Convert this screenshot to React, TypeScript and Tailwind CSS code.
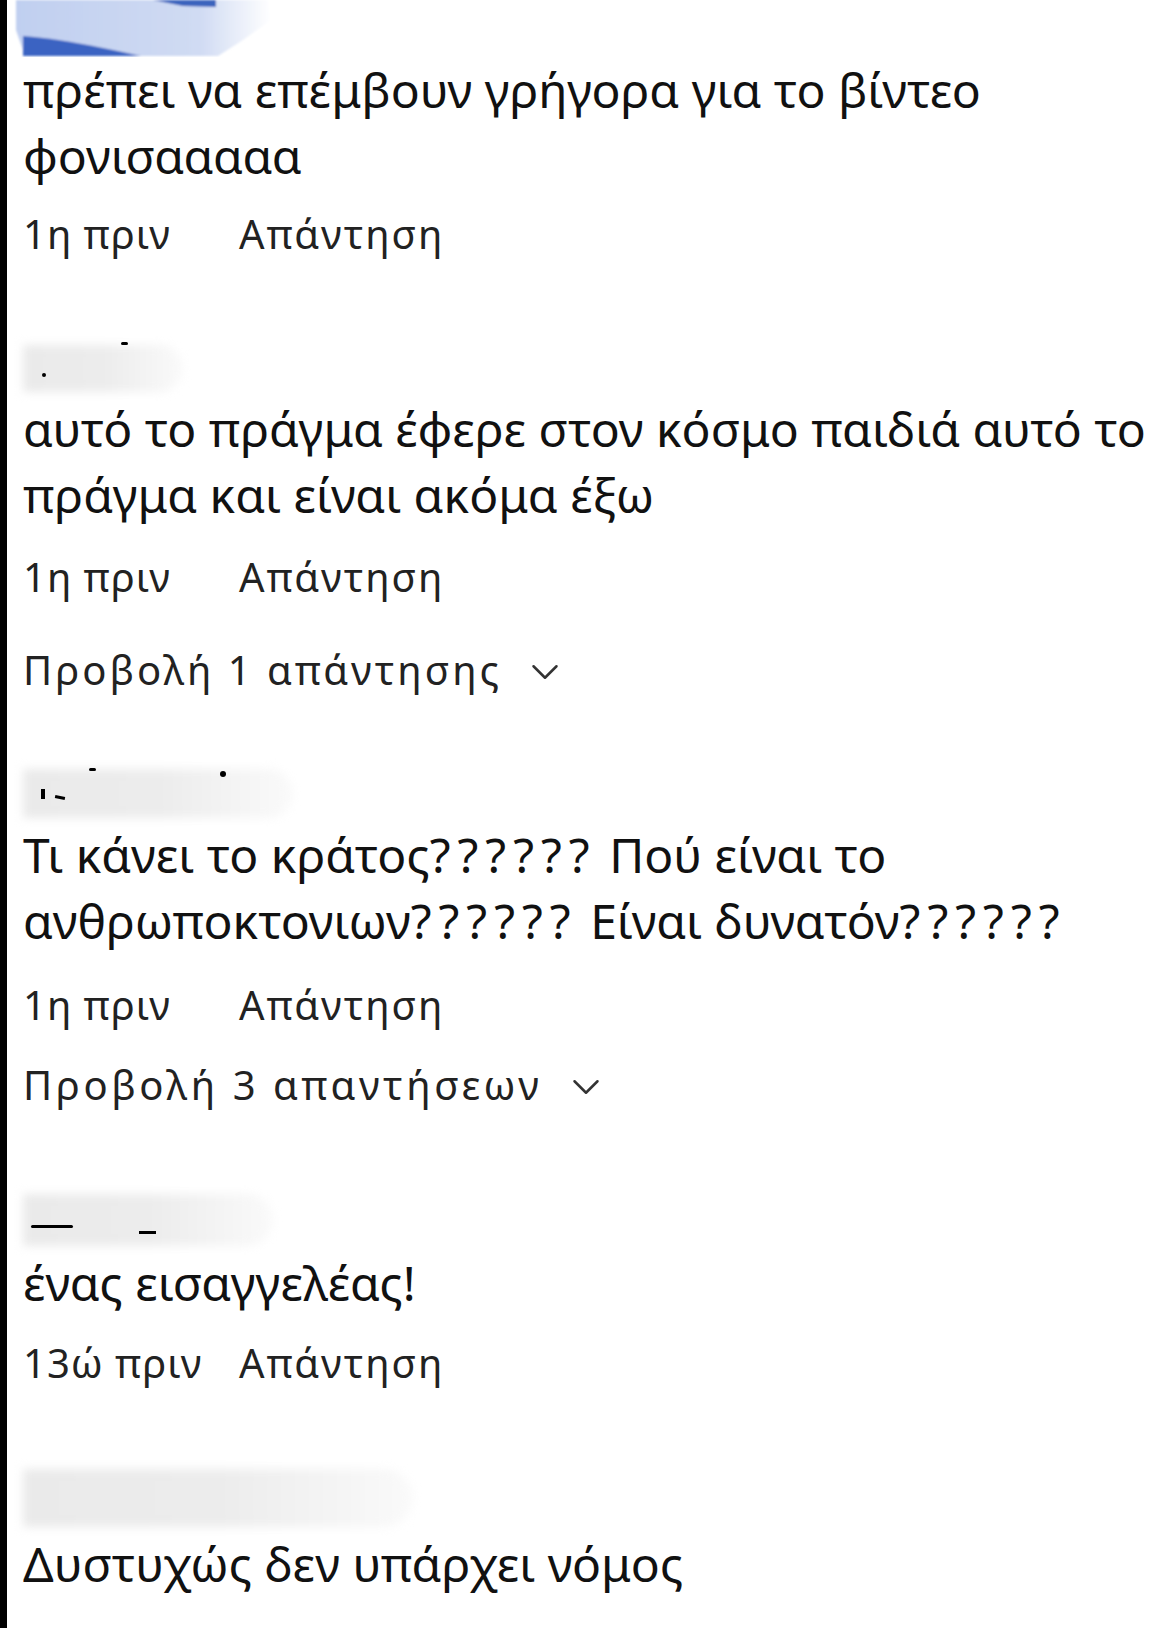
import React from "react";
import { ChevronDown } from "lucide-react";

const font = { fontFamily: '"Noto Sans", "DejaVu Sans", sans-serif' };

function Main({ children }: { children: React.ReactNode }) {
  return (
    <p className="text-[48px] leading-[66px] text-[#111]" style={font}>
      {children}
    </p>
  );
}

function Q() {
  return <span className="tracking-[7px]">??????</span>;
}

function Meta({ time, mt }: { time: string; mt: string }) {
  return (
    <div className={`flex items-baseline text-[40px] leading-[50px] text-[#222] ${mt}`} style={font}>
      <span className="w-[216px] shrink-0 tracking-[1px]">{time}</span>
      <span className="tracking-[2px]">Απάντηση</span>
    </div>
  );
}

function Replies({ label, mt, wide }: { label: string; mt: string; wide?: boolean }) {
  return (
    <div className={`flex items-center gap-[20px] text-[40px] leading-[50px] text-[#222] ${mt}`} style={font}>
      <span className={wide ? "tracking-[3.6px]" : "tracking-[3px]"}>{label}</span>
      <ChevronDown className="w-[46px] h-[46px] text-[#333] mt-[4px]" strokeWidth={1.3} />
    </div>
  );
}

function Blur({ w, h, mt, children }: { w: string; h: string; mt: string; children?: React.ReactNode }) {
  return (
    <div className={`relative ${w} ${h} ${mt}`}>
      <div className="absolute left-0 right-0 top-[6px] bottom-[4px] rounded-r-[40px] bg-gradient-to-r from-[#eaeaea] via-[#ececec] to-[#fafafa] blur-[5px]" />
      {children}
    </div>
  );
}

function TopBlob() {
  return (
    <svg width="260" height="57" viewBox="0 0 260 57" className="block -ml-[10px]">
      <defs>
        <linearGradient id="lb" x1="0" y1="0" x2="1" y2="0">
          <stop offset="0" stopColor="#c0cff0" />
          <stop offset="0.72" stopColor="#d0dbf3" />
          <stop offset="1" stopColor="#ffffff" />
        </linearGradient>
        <filter id="bl" x="-10%" y="-10%" width="120%" height="120%">
          <feGaussianBlur stdDeviation="1.2" />
        </filter>
      </defs>
      <g filter="url(#bl)">
        <path d="M3 0 H255 L258 20 L230 40 L205 56 H12 L3 30 Z" fill="url(#lb)" />
        <path d="M140 0 H203 V7 L170 6 Z" fill="#3a63bd" />
        <path d="M10 36 C40 38 70 44 100 50 L128 56 H10 Z" fill="#3b64c2" />
      </g>
    </svg>
  );
}

export default function App() {
  return (
    <div className="min-h-[1628px] bg-white flex">
      <div className="w-[7px] bg-black shrink-0" />
      <div className="flex-1 pl-[16px]">
        {/* Comment 1 */}
        <TopBlob />
        <Main>
          πρέπει να επέμβουν γρήγορα για το βίντεο
          <br />
          φονισααααα
        </Main>
        <Meta time="1η πριν" mt="mt-[20px]" />

        {/* Comment 2 */}
        <Blur w="w-[160px]" h="h-[57px]" mt="mt-[80px]">
          <span className="absolute left-[98px] top-[3px] w-[7px] h-[3px] bg-black rounded-full" />
          <span className="absolute left-[19px] top-[34px] w-[4px] h-[4px] bg-black rounded-full" />
        </Blur>
        <Main>
          αυτό το πράγμα έφερε στον κόσμο παιδιά αυτό το
          <br />
          πράγμα και είναι ακόμα έξω
        </Main>
        <Meta time="1η πριν" mt="mt-[24px]" />
        <Replies label="Προβολή 1 απάντησης" mt="mt-[43px]" />

        {/* Comment 3 */}
        <Blur w="w-[270px]" h="h-[59px]" mt="mt-[68px]">
          <span className="absolute left-[66px] top-[5px] w-[7px] h-[3px] bg-black rounded-full" />
          <span className="absolute left-[197px] top-[8px] w-[6px] h-[6px] bg-black rounded-full" />
          <span className="absolute left-[18px] top-[26px] w-[4px] h-[10px] bg-black" />
          <span className="absolute left-[32px] top-[33px] w-[10px] h-[3px] bg-black rotate-12" />
        </Blur>
        <Main>
          Τι κάνει το κράτος<Q /> Πού είναι το
          <br />
          ανθρωποκτονιων<Q /> Είναι δυνατόν<Q />
        </Main>
        <Meta time="1η πριν" mt="mt-[26px]" />
        <Replies label="Προβολή 3 απαντήσεων" mt="mt-[30px]" wide />

        {/* Comment 4 */}
        <Blur w="w-[250px]" h="h-[62px]" mt="mt-[78px]">
          <span className="absolute left-[8px] top-[37px] w-[42px] h-[3px] bg-black rounded-full" />
          <span className="absolute left-[116px] top-[43px] w-[17px] h-[3px] bg-black" />
        </Blur>
        <Main>ένας εισαγγελέας!</Main>
        <Meta time="13ώ πριν" mt="mt-[22px]" />

        {/* Comment 5 */}
        <Blur w="w-[390px]" h="h-[68px]" mt="mt-[75px]" />
        <Main>Δυστυχώς δεν υπάρχει νόμος</Main>
      </div>
    </div>
  );
}
